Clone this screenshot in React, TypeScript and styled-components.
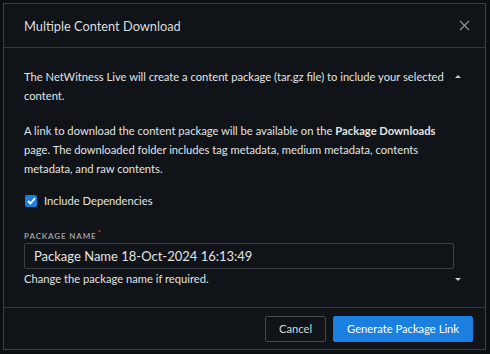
import { createGlobalStyle, styled } from "styled-components";

const Global = createGlobalStyle`
  html, body {
    margin: 0;
    padding: 0;
    background: #0b0e12;
    font-family: Lato, "Open Sans", sans-serif;
  }
`;

const Backdrop = styled.div`
  width: 490px;
  height: 354px;
  padding: 3px 4px 4px 3px;
  box-sizing: border-box;
`;

const Dialog = styled.div`
  height: 347px;
  border: 1px solid #3b3e42;
  background: #101317;
  display: flex;
  flex-direction: column;
  box-sizing: border-box;
  color: #e2e3e4;
`;

const Header = styled.div`
  height: 44px;
  display: flex;
  align-items: center;
  justify-content: space-between;
  padding: 0 15px 0 20px;
  border-bottom: 1px solid #33363a;
  box-sizing: border-box;
`;

const Title = styled.div`
  font-size: 12.8px;
  color: #dcdddf;
`;

const Body = styled.div`
  flex: 1;
  padding: 19px 20px 0 20px;
  font-size: 11.2px;
  line-height: 19px;
`;

const Row = styled.div`
  display: flex;
  align-items: flex-start;
  justify-content: space-between;
`;

const Para = styled.p<{ $gap?: number }>`
  margin: 0 0 ${(p) => p.$gap ?? 0}px 0;
  width: 440px;
`;

const Caret = styled.span<{ $up?: boolean }>`
  width: 0;
  height: 0;
  margin: ${(p) => (p.$up ? "8px" : "9px")} 4px 0 0;
  border-left: 3px solid transparent;
  border-right: 3px solid transparent;
  ${(p) =>
    p.$up ? "border-bottom: 3px solid #c8c9cb;" : "border-top: 3px solid #c8c9cb;"}
`;

const Check = styled.label`
  display: flex;
  align-items: center;
  gap: 7px;
  margin: 13px 0 0 1px;
`;

const Box = styled.span`
  width: 12px;
  height: 12px;
  border-radius: 2px;
  background: #1b7fe0;
  display: flex;
  align-items: center;
  justify-content: center;
`;

const FieldLabel = styled.div`
  margin-top: 17px;
  font-size: 8px;
  font-weight: 700;
  letter-spacing: 0.85px;
  color: #9a9c9f;
  line-height: 12px;
`;

const Req = styled.span`
  color: #e0302c;
  vertical-align: 3px;
  margin-left: 1px;
`;

const Input = styled.div`
  margin-top: 1px;
  width: 430px;
  height: 26px;
  border: 1px solid #3c3f43;
  border-radius: 2px;
  box-sizing: border-box;
  padding: 0 9px;
  display: flex;
  align-items: center;
  font-size: 13px;
  color: #e2e3e4;
`;

const Footer = styled.div`
  height: 42px;
  border-top: 1px solid #33363a;
  display: flex;
  align-items: center;
  justify-content: flex-end;
  gap: 7px;
  padding: 0 12px 0 0;
  box-sizing: border-box;
`;

const Button = styled.button<{ $primary?: boolean }>`
  height: 26px;
  border-radius: 2px;
  font-family: Lato, sans-serif;
  font-size: 11.2px;
  padding: 0 13px;
  background: ${(p) => (p.$primary ? "#1b7fe0" : "transparent")};
  border: 1px solid ${(p) => (p.$primary ? "#1b7fe0" : "#45484c")};
  color: ${(p) => (p.$primary ? "#ffffff" : "#d6d7d9")};
`;

export default function App() {
  return (
    <>
      <Global />
      <Backdrop>
        <Dialog>
          <Header>
            <Title>Multiple Content Download</Title>
            <svg width="11" height="11" viewBox="0 0 11 11">
              <path d="M1 1L10 10M10 1L1 10" stroke="#8d8f93" strokeWidth="1.3" />
            </svg>
          </Header>
          <Body>
            <Row>
              <Para $gap={16}>
                The NetWitness Live will create a content package (tar.gz file) to include your selected
                content.
              </Para>
              <Caret $up />
            </Row>
            <Para>
              A link to download the content package will be available on the{" "}
              <b>Package Downloads</b> page. The downloaded folder includes tag metadata, medium
              metadata, contents metadata, and raw contents.
            </Para>
            <Check>
              <Box>
                <svg width="9" height="8" viewBox="0 0 9 8">
                  <path d="M1 4L3.5 6.5L8 1.2" stroke="#fff" strokeWidth="1.8" fill="none" />
                </svg>
              </Box>
              Include Dependencies
            </Check>
            <FieldLabel>
              PACKAGE NAME<Req>*</Req>
            </FieldLabel>
            <Input>Package Name 18-Oct-2024 16:13:49</Input>
            <Row>
              <Para>Change the package name if required.</Para>
              <Caret />
            </Row>
          </Body>
          <Footer>
            <Button>Cancel</Button>
            <Button $primary>Generate Package Link</Button>
          </Footer>
        </Dialog>
      </Backdrop>
    </>
  );
}
